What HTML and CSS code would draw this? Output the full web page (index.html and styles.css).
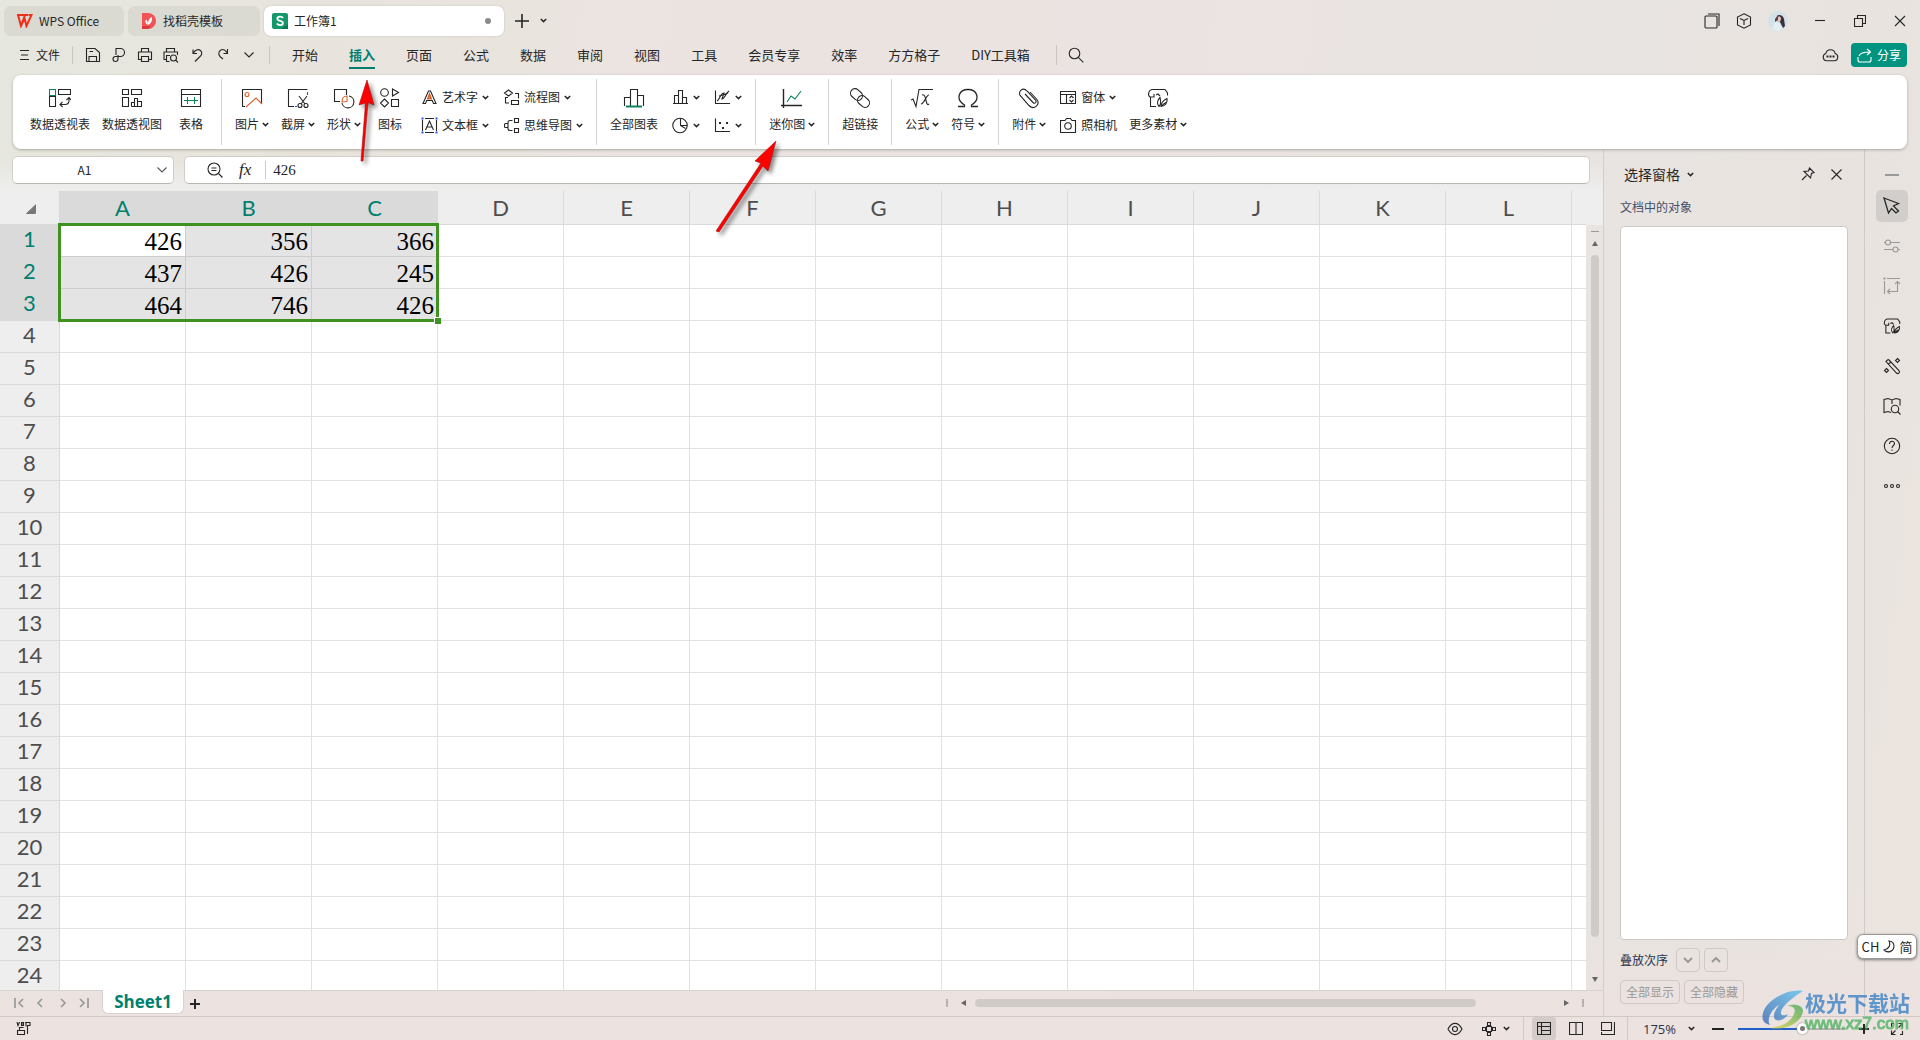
FILE: index.html
```html
<!DOCTYPE html>
<html lang="zh-CN">
<head>
<meta charset="utf-8">
<title>工作簿1 - WPS Office</title>
<link rel="stylesheet" href="styles.css">
</head>
<body>
<svg class="sprite" aria-hidden="true">
  <symbol id="chev" viewBox="0 0 7 5"><path d="M.8 1 3.5 3.6 6.2 1" fill="none" stroke="currentColor" stroke-width="1.5"/></symbol>
  <symbol id="chev-l" viewBox="0 0 12 8"><path d="M1.5 1.5 6 6 10.500 1.500" fill="none" stroke="currentColor" stroke-width="1.1"/></symbol>
  <symbol id="material" viewBox="0 0 22 22"><path d="M9 19.500H3.500V10M3 10C0 8 2 3 5 2.500h13l2.500 3.500v2.500M3 10h4V7M9 8l2-1 2 2M12 19.500c-3-3-1-7 1-9 1 4 1 7-1 9zm2 0c0-4 2-6 6-8 1 4-2 8-6 8zm0 0c1-1 3-3 5-4"/></symbol>
</svg>

<header class="titlebar">
  <nav class="doc-tabs" aria-label="文档">
    <button class="doc-tab doc-home">
      <svg width="17" height="14" viewBox="0 0 17 14"><path d="M1 1h11l-2 0M2 1l3 11 3.500-8M5 12l4-11M8.500 4l2 8L15.500 1h-3" fill="none" stroke="#f0301c" stroke-width="2"/></svg>
      <span>WPS Office</span>
    </button>
    <button class="doc-tab doc-template">
      <svg width="15" height="16" viewBox="0 0 15 16"><path d="M1 0h6a8 8 0 0 1 0 16H1z" fill="#f25355"/><path d="M1 13h9l-3 3H1z" fill="#d9383c"/><path d="M6.500 12C4 10 4 8 5 6.500 7 8 7 10 6.500 12zm.5 0C7 8 8 5 11 4c.5 4-1 6.500-4 8z" fill="#fff"/></svg>
      <span>找稻壳模板</span>
    </button>
    <button class="doc-tab doc-current">
      <svg width="16" height="16" viewBox="0 0 16 16"><rect width="16" height="16" rx="2" fill="#12986a"/><path d="M9 16h7v-5z" fill="#0b7a53"/><path d="M11 4.800C9.500 3 5.300 3.200 5.300 5.800c0 2.800 5.600 1.400 5.600 4.200 0 2.700-4.500 2.700-6 .6" fill="none" stroke="#fff" stroke-width="1.800"/></svg>
      <span>工作簿1</span><i class="dot"></i>
    </button>
    <button class="plain" aria-label="新建"><svg class="ico" width="14" height="14" viewBox="0 0 14 14"><path d="M7 0v14M0 7h14" stroke-width="1.600"/></svg></button>
    <button class="plain" aria-label="标签列表"><svg width="7" height="5"><use href="#chev"/></svg></button>
  </nav>
  <div class="win-controls">
    <button class="plain" aria-label="窗口"><svg class="ico" width="16" height="16" viewBox="0 0 16 16"><rect x="1" y="3" width="12" height="12" rx="1"/><path d="M4 1h11v12"/></svg></button>
    <button class="plain" aria-label="应用"><svg class="ico" width="16" height="16" viewBox="0 0 16 16"><path d="M8 .8 14.500 4v8L8 15.200 1.500 12V4zM4 5.500l4 2 4-2M8 7.500V12"/></svg></button>
    <button class="plain avatar" aria-label="账户"><svg width="20" height="20" viewBox="0 0 20 20"><circle cx="10" cy="10" r="10" fill="#d3e1e9"/><path d="M9 5c2-2 6-1 7 3l1 7-2 2-3-6-2-1z" fill="#39303c"/><path d="M7 8l3-4 2 1-2 4-3 2z" fill="#5a4448"/><path d="M10 6c2-1 3 0 3 2l-1 3-2-1z" fill="#e9c4b8"/><path d="M4 18l3-7 4 1 3 6-4 2z" fill="#e4eff4"/></svg></button>
    <button class="plain" aria-label="最小化"><svg class="ico" width="12" height="12" viewBox="0 0 12 12"><path d="M1 5.500h10"/></svg></button>
    <button class="plain" aria-label="还原"><svg class="ico" width="12" height="12" viewBox="0 0 12 12"><path d="M.5 3.500h8v8h-8zM3.500 3.500v-3h8v8h-3"/></svg></button>
    <button class="plain" aria-label="关闭"><svg class="ico" width="12" height="12" viewBox="0 0 12 12"><path d="M1 1l10 10M11 1 1 11"/></svg></button>
  </div>
</header>

<div class="menubar">
  <button class="file-menu"><svg class="ico" width="9" height="12" viewBox="0 0 9 12"><path d="M0 1.500h9M1 6h7M0 10.500h9"/></svg>文件</button>
  <div class="quick">
    <button class="plain" aria-label="保存"><svg class="ico" width="16" height="16" viewBox="0 0 16 16"><path d="M1.500 14.500v-13H10l4.500 4v9zM4 14V9.500h7.500V14M4.500 4.500H8"/></svg></button>
    <button class="plain" aria-label="输出"><svg class="ico" width="16" height="16" viewBox="0 0 16 16"><path d="M5 8V1.500h4.500a4 4 0 0 1 0 8H4.500a2.500 2.500 0 1 0 2.500 2.500V8"/></svg></button>
    <button class="plain" aria-label="打印"><svg class="ico" width="16" height="16" viewBox="0 0 16 16"><path d="M4.500 5V1.500h7V5M4 12.500H1.500V5h13v7.500H12M4.500 9.500h7v5h-7z"/></svg></button>
    <button class="plain" aria-label="打印预览"><svg class="ico" width="16" height="16" viewBox="0 0 16 16"><path d="M3.500 5V1.500h8V5M3 12.500H1V5h13.500v3M6.500 14.500h-3v-6H7"/><circle cx="10.500" cy="11" r="3"/><path d="m12.700 13.200 2.300 2.300"/></svg></button>
    <button class="plain" aria-label="撤销"><svg class="ico" width="16" height="16" viewBox="0 0 16 16"><path d="M4 2.500v4h4M4.200 6.300C6 3 9 1.500 11.500 3.500c2.500 2.200 1 5-1 6.500L6 14.500"/></svg></button>
    <button class="plain" aria-label="重做"><svg class="ico" width="16" height="16" viewBox="0 0 16 16"><path d="M12.500 2v4.500h-4M12.300 6.300C11 3 8 1.500 5.500 3.300 3 5.300 3.500 8 5.500 10L8 12"/></svg></button>
    <button class="plain" aria-label="更多"><svg width="12" height="8"><use href="#chev-l"/></svg></button>
  </div>
  <nav class="menu-tabs" aria-label="功能区">
    <button>开始</button><button class="active">插入</button><button>页面</button><button>公式</button><button>数据</button><button>审阅</button><button>视图</button><button>工具</button><button>会员专享</button><button>效率</button><button>方方格子</button><button>DIY工具箱</button>
  </nav>
  <button class="plain search" aria-label="搜索"><svg class="ico" width="16" height="16" viewBox="0 0 16 16"><circle cx="6.500" cy="6.500" r="5.300"/><path d="m10.300 10.300 5 5"/></svg></button>
  <div class="share-area">
    <button class="plain" aria-label="云"><svg class="ico" width="17" height="14" viewBox="0 0 17 14"><path d="M4.500 12.800a3.700 3.700 0 0 1-.7-7.200 4.800 4.800 0 0 1 9.400 0 3.700 3.700 0 0 1-.7 7.200z"/><path d="M4.500 8.500h2M7.500 8.500h2M10.500 8.500h2" stroke-width="2"/></svg></button>
    <button class="share"><svg class="ico" width="15" height="15" viewBox="0 0 15 15"><path d="M1 9v3q0 2 2 2h9q2 0 2-2V9M2 8c1-3 4-4 11-4M10 1l3.500 3L10 7"/></svg>分享</button>
  </div>
</div>

<section class="ribbon" aria-label="插入">
  <div class="group">
    <button class="tool"><svg class="ico" width="22" height="22" viewBox="0 0 22 22"><path d="M.5 9.500h6v10h-6zM9.500 2.500h12v5h-12zM11 17.500h5q4 0 4-4v-2M13.500 15 11 17.500l2.500 2.500M17.500 13 20 10.500l2 2.500"/><path class="green" d="M.5 2.500h6v6h-6z"/></svg><span>数据透视表</span></button>
    <button class="tool"><svg class="ico" width="22" height="22" viewBox="0 0 22 22"><path d="M1.500 2.500h6v5h-6zM10.500 2.500h10v5h-10zM1.500 10.500h6v9h-6zM10.500 19.500v-4h3v4M13.500 19.500v-8h3v8M16.500 14.500h4v5h-10"/></svg><span>数据透视图</span></button>
    <button class="tool"><svg class="ico" width="22" height="22" viewBox="0 0 22 22"><path d="M1.500 2.500h19v17h-19zM1.500 7.500h19"/><path class="green" d="M4 13.500h14M7.500 10v7M14.500 10v7"/></svg><span>表格</span></button>
  </div>
  <div class="group">
    <button class="tool"><svg class="ico" width="22" height="22" viewBox="0 0 22 22"><path d="M4 19.500H1.500v-17h19V17"/><path class="orange" d="m5 20 10-9 6 6M4 7.500a2 2 0 1 0 4 0 2 2 0 1 0-4 0"/></svg><span>图片<svg width="7" height="5"><use href="#chev"/></svg></span></button>
    <button class="tool"><svg class="ico" width="22" height="22" viewBox="0 0 22 22"><path d="M7 19.500H1.500v-17h19M12 9l6 8M20 9l-6 8"/><circle cx="13" cy="18.500" r="2"/><circle cx="19" cy="18.500" r="2"/><path class="blue" d="M20.500 5v3M8 19.500h2"/></svg><span>截屏<svg width="7" height="5"><use href="#chev"/></svg></span></button>
    <button class="tool"><svg class="ico" width="22" height="22" viewBox="0 0 22 22"><path d="M7 14.500H1.500v-12h12V8M16 9a6 6 0 1 1-7 7"/><path class="orange" d="M9 15c0-4 2-6 5-6v5.500z"/></svg><span>形状<svg width="7" height="5"><use href="#chev"/></svg></span></button>
    <button class="tool"><svg class="ico" width="22" height="22" viewBox="0 0 22 22"><circle cx="5.500" cy="5.500" r="3.800"/><path d="M13.500 2v7l6-3.500zM5.500 12l4 4-4 4-4-4zM12.500 12.500h7v7h-7z"/></svg><span>图标</span></button>
    <div class="stack">
      <button class="mini"><svg class="ico" width="17" height="17" viewBox="0 0 17 17"><path d="M2 14.500 7.500 2h2L15 14.500h-2.500l-1.200-3H5.700l-1.200 3z"/><path d="M8.500 4.500 6.500 10h4z" fill="#e4763c" stroke="#d8622b"/></svg>艺术字<svg width="7" height="5"><use href="#chev"/></svg></button>
      <button class="mini"><svg class="ico" width="17" height="17" viewBox="0 0 17 17"><path d="M1.500 3v11M15.500 3v11M4 1.500h9M4 15.500h9M4.500 13l4-9 4 9M6 10h5"/><path class="blue" stroke-width="2" d="M.5 1.500h2M14.500 1.500h2M.5 15.500h2M14.500 15.500h2"/></svg>文本框<svg width="7" height="5"><use href="#chev"/></svg></button>
    </div>
    <div class="stack">
      <button class="mini"><svg class="ico" width="17" height="17" viewBox="0 0 17 17"><path d="m5.500 1 4 3-4 3-4-3zM12 4.500h3.500v5M5 8.500H2.500V14H6M8.500 11.500h7v4h-7z"/></svg>流程图<svg width="7" height="5"><use href="#chev"/></svg></button>
      <button class="mini"><svg class="ico" width="17" height="17" viewBox="0 0 17 17"><path d="M11.500 1.500h4v4h-4zM11.500 11.500h4v4h-4zM9.500 3.500H7q-2 0-2 2v6q0 2 2 2h2.500M2.500 6.500H5v4H2.500a1 1 0 0 1-1-1v-2a1 1 0 0 1 1-1z"/></svg>思维导图<svg width="7" height="5"><use href="#chev"/></svg></button>
    </div>
  </div>
  <div class="group">
    <button class="tool"><svg class="ico" width="22" height="22" viewBox="0 0 22 22"><path d="M1.500 19v-8.500h6M7.500 19V2.500h7V19M14.500 8.500h6V19"/><path class="green" stroke-width="2" d="M3 19.500h16"/></svg><span>全部图表</span></button>
    <div class="stack">
      <button class="mini" aria-label="柱形图"><svg class="ico" width="17" height="17" viewBox="0 0 17 17"><path d="M1 14.500h15M2.500 14V6.500h4V14M6.500 14V1.500h4V14M10.500 8.500h4V14"/></svg><svg width="7" height="5"><use href="#chev"/></svg></button>
      <button class="mini" aria-label="饼图"><svg class="ico" width="17" height="17" viewBox="0 0 17 17"><circle cx="8" cy="8.500" r="7.200"/><path d="M8.500 1.500v7l5 3M8.500 8.500h7"/></svg><svg width="7" height="5"><use href="#chev"/></svg></button>
    </div>
    <div class="stack">
      <button class="mini" aria-label="折线图"><svg class="ico" width="17" height="17" viewBox="0 0 17 17"><path d="M1.500 1.500v13H16M3 12c3-1 3-8 7-8l-2 6c3 0 3-5 7-8M5 7c5-1 5-1 9-3"/></svg><svg width="7" height="5"><use href="#chev"/></svg></button>
      <button class="mini" aria-label="散点图"><svg class="ico" width="17" height="17" viewBox="0 0 17 17"><path d="M1.500 1.500v13H16"/><path stroke-width="2" d="M5 6h2M8 11h2M12 6h2"/></svg><svg width="7" height="5"><use href="#chev"/></svg></button>
    </div>
  </div>
  <div class="group">
    <button class="tool"><svg class="ico" width="22" height="22" viewBox="0 0 22 22"><path stroke-width="1.400" d="M2.500 2v19M0 18.500h21"/><path class="green" d="m6 15 4-6 4 3 6-8"/></svg><span>迷你图<svg width="7" height="5"><use href="#chev"/></svg></span></button>
  </div>
  <div class="group">
    <button class="tool"><svg class="ico" width="22" height="22" viewBox="0 0 22 22"><rect x="1" y="3" width="13" height="9" rx="4.500" transform="rotate(42 7.500 7.500)"/><rect x="8" y="10" width="13" height="9" rx="4.500" transform="rotate(42 14.500 14.500)"/></svg><span>超链接</span></button>
  </div>
  <div class="group">
    <button class="tool"><svg class="ico" width="22" height="22" viewBox="0 0 22 22"><path d="M0 13l2-1 3 7.500L8 2.500h14M11 8c5-2 3 12 7 9M18 8c-2-1-5 9-8 9"/></svg><span>公式<svg width="7" height="5"><use href="#chev"/></svg></span></button>
    <button class="tool"><svg class="ico" width="22" height="22" viewBox="0 0 22 22"><path stroke-width="1.300" d="M1 19.500h6.500V18C-2 12 2 2.500 11 2.500S24 12 14.500 18v1.500H21"/></svg><span>符号<svg width="7" height="5"><use href="#chev"/></svg></span></button>
  </div>
  <div class="group">
    <button class="tool"><svg class="ico" width="22" height="22" viewBox="0 0 22 22"><path d="m7 7 8 8.500c2 2 4-.5 2.500-2.500L9 4C5-.5-1.500 5 3 9.500l8 9c5 5 12-1 7.500-6.500L12 5"/></svg><span>附件<svg width="7" height="5"><use href="#chev"/></svg></span></button>
    <div class="stack">
      <button class="mini"><svg class="ico" width="17" height="17" viewBox="0 0 17 17"><path d="M.5 2.500h15v12H.500zM.5 5.500h15M6.500 5.500v9M9.500 9l2-2 2 2M9.500 11l2 2 2-2"/></svg>窗体<svg width="7" height="5"><use href="#chev"/></svg></button>
      <button class="mini"><svg class="ico" width="17" height="17" viewBox="0 0 17 17"><path d="M.5 3.500H5l1.500-2h4l1.500 2h3.500v12H.500z"/><circle cx="8" cy="9" r="3.300"/></svg>照相机</button>
    </div>
    <button class="tool"><svg class="ico" width="22" height="22"><use href="#material"/></svg><span>更多素材<svg width="7" height="5"><use href="#chev"/></svg></span></button>
  </div>
</section>

<main class="workspace">
  <section class="sheet-area">
    <div class="formula-row">
      <div class="name-box"><input aria-label="名称框" value="A1"><svg width="12" height="8"><use href="#chev-l"/></svg></div>
      <div class="formula-box">
        <svg class="ico" width="16" height="16" viewBox="0 0 16 16"><circle cx="7" cy="7" r="6"/><path d="m11.500 11.500 4 4M4.500 6h5M4.500 8.500h5"/></svg>
        <span class="fx">fx</span>
        <input aria-label="编辑栏" value="426">
      </div>
    </div>
    <div class="grid-row">
      <div class="grid">
        <table>
          <thead><tr id="heads"><th class="corner"><svg width="10" height="10" viewBox="0 0 10 10"><path d="M10 0v8.500q0 1.500-1.500 1.500H1Q-.5 10 .5 9z" fill="#777"/></svg></th></tr></thead>
          <tbody id="rows"></tbody>
        </table>
        <div class="selection"></div>
      </div>
      <div class="vscroll"><i class="vtop"></i><svg width="6" height="5" viewBox="0 0 6 5"><path d="M3 0l3 5H0z" fill="#666"/></svg><i class="vthumb"></i><svg width="6" height="5" viewBox="0 0 6 5"><path d="M0 0h6L3 5z" fill="#666"/></svg></div>
    </div>
    <div class="sheet-bar">
      <div class="sheet-nav">
        <button class="plain" aria-label="第一张"><svg class="ico" width="10" height="10" viewBox="0 0 10 10"><path d="M1 0v10M9 1 5 5l4 4"/></svg></button>
        <button class="plain" aria-label="上一张"><svg class="ico" width="10" height="10" viewBox="0 0 10 10"><path d="M7 1 3 5l4 4"/></svg></button>
        <button class="plain" aria-label="下一张"><svg class="ico" width="10" height="10" viewBox="0 0 10 10"><path d="m3 1 4 4-4 4"/></svg></button>
        <button class="plain" aria-label="最后一张"><svg class="ico" width="10" height="10" viewBox="0 0 10 10"><path d="M9 0v10M1 1l4 4-4 4"/></svg></button>
      </div>
      <button class="sheet-tab">Sheet1</button>
      <button class="plain add" aria-label="新建工作表"><svg class="ico" width="10" height="10" viewBox="0 0 10 10"><path d="M5 0v10M0 5h10" stroke-width="2"/></svg></button>
      <div class="hscroll"><i class="bar"></i><svg width="5" height="6" viewBox="0 0 5 6"><path d="M5 0v6L0 3z" fill="#666"/></svg><div class="track"><i class="thumb"></i></div><svg width="5" height="6" viewBox="0 0 5 6"><path d="M0 0v6l5-3z" fill="#666"/></svg><i class="bar"></i></div>
    </div>
  </section>

  <aside class="pane">
    <div class="pane-head">
      <h2>选择窗格</h2><svg width="7" height="5"><use href="#chev"/></svg>
      <button class="plain pin" aria-label="固定"><svg class="ico" width="14" height="14" viewBox="0 0 14 14"><path d="m8.500 1 4.500 4.500-2.500 1L9.500 11 3 4.500 7.500 4zM5.500 8.500 1 13"/></svg></button>
      <button class="plain" aria-label="关闭窗格"><svg class="ico" width="11" height="11" viewBox="0 0 11 11"><path d="m.5.500 10 10M10.500.500l-10 10"/></svg></button>
    </div>
    <p class="pane-label">文档中的对象</p>
    <div class="object-list"></div>
    <div class="order"><span>叠放次序</span>
      <button class="box-btn" aria-label="下移"><svg class="ico" width="10" height="6" viewBox="0 0 10 6"><path d="m1 1 4 4 4-4"/></svg></button>
      <button class="box-btn" aria-label="上移"><svg class="ico" width="10" height="6" viewBox="0 0 10 6"><path d="m1 5 4-4 4 4"/></svg></button>
    </div>
    <div class="show-btns"><button class="box-btn">全部显示</button><button class="box-btn">全部隐藏</button></div>
  </aside>

  <nav class="sidebar" aria-label="任务窗格">
    <button class="plain collapse" aria-label="折叠"><i></i></button>
    <button class="side on" aria-label="选择"><svg class="ico" width="18" height="18" viewBox="0 0 18 18"><path stroke-width="1.300" d="m1 1 14.500 5.500-5 2.500 5 5-2.500 2-4.500-4.500L5.500 16z"/></svg></button>
    <button class="side dim" aria-label="属性"><svg class="ico" width="18" height="18" viewBox="0 0 18 18"><path d="M1 5.500h2M7.500 5.500H17M1 12.500h9M15 12.500h2"/><circle cx="5" cy="5.500" r="2.500"/><circle cx="12.500" cy="12.500" r="2.500"/></svg></button>
    <button class="side dim" aria-label="跳转"><svg class="ico" width="18" height="18" viewBox="0 0 18 18"><path d="M4 1.500h13M1.500 4v13M5 14.500h9.500V5M7 12l-2.500 2.500L7 17M12 7l2.500-2.500L17 7"/><path stroke-width="2" d="M.5 1.500h2"/></svg></button>
    <button class="side" aria-label="素材"><svg class="ico heavy" width="18" height="18"><use href="#material"/></svg></button>
    <button class="side" aria-label="美化"><svg class="ico" width="18" height="18" viewBox="0 0 18 18"><path d="M4.500 3 3 4.500 13.500 16c1.500 1.500 4-.5 2.500-2.500L6 3Q5.200 2.200 4.500 3zM5.500 7 8 5M14.500 1.500l2 2-2 2-2-2zM3.500 11.500l2 2-2 2-2-2z"/></svg></button>
    <button class="side" aria-label="查找"><svg class="ico" width="18" height="18" viewBox="0 0 18 18"><path d="M8 15.500 5 14.500l-4 1v-13l4-1 4 1.500 4-1.500 4 1v6M9 3v4"/><circle cx="12" cy="12" r="3.700"/><path d="m14.500 14.500 3 3"/></svg></button>
    <button class="side" aria-label="帮助"><svg class="ico" width="18" height="18" viewBox="0 0 18 18"><circle cx="9" cy="9" r="7.700"/><path d="M6.500 7c0-3.500 5-3.500 5-.5 0 2-2.500 2-2.500 4.500M9 12.500v1.300"/></svg></button>
    <button class="side" aria-label="更多"><svg class="ico" width="18" height="18" viewBox="0 0 18 18"><circle cx="3" cy="9" r="1.500"/><circle cx="9" cy="9" r="1.500"/><circle cx="15" cy="9" r="1.500"/></svg></button>
  </nav>
</main>

<footer class="status">
  <svg class="ico macro" width="15" height="14" viewBox="0 0 15 14"><path d="m1 0 1 3.500L3.500 0M5.500.500h2v3h-2zM5.500 2h2M9 .500h5v3h-2.500V12M10 .500v4M1.500 12.500v-4h7v4zM3.500 8V5.500h4"/></svg>
  <button class="plain eye" aria-label="护眼"><svg class="ico" width="16" height="14" viewBox="0 0 16 14"><path d="M1 7c4-7.500 10-7.500 14 0-4 7.500-10 7.500-14 0z"/><circle cx="8" cy="7" r="2.500"/></svg></button>
  <button class="plain reading" aria-label="阅读"><svg class="ico" width="14" height="14" viewBox="0 0 14 14"><path d="M5.500.500h3v3h-3zM5.500 10.500h3v3h-3zM.5 5.500h3v3h-3zM10.500 5.500h3v3h-3zM4.500 4.500h5v5h-5z"/></svg><svg width="7" height="5"><use href="#chev"/></svg></button>
  <div class="views">
    <button class="view on" aria-label="普通视图"><svg class="ico" width="14" height="13" viewBox="0 0 14 13"><path d="M.5.500h13v12H.500zM.5 4.500h13M4.500.500v12M4.500 8.500h9"/></svg></button>
    <button class="view" aria-label="分页预览"><svg class="ico" width="14" height="13" viewBox="0 0 14 13"><path d="M.5.500h13v12H.500zM7 .500v12"/></svg></button>
    <button class="view" aria-label="页面布局"><svg class="ico" width="14" height="13" viewBox="0 0 14 13"><path d="M.5.500h10v8H.500zM.5 10v2.500h13V0"/></svg></button>
  </div>
  <button class="plain zoom-val">175%<svg width="7" height="5"><use href="#chev"/></svg></button>
  <button class="plain minus" aria-label="缩小"><i></i></button>
  <input class="zoom" type="range" min="0" max="100" value="61" aria-label="缩放">
  <button class="plain plus" aria-label="放大"><svg class="ico" width="10" height="10" viewBox="0 0 10 10"><path d="M5 0v10M0 5h10" stroke-width="2"/></svg></button>
  <button class="plain full" aria-label="全屏"><svg class="ico" width="14" height="14" viewBox="0 0 14 14"><path d="M8.500 1.500h4v4M5.500 12.500h-4v-4M12 2 8.500 5.500M2 12l3.500-3.500M1.500 5V1.500H4M12.500 9v3.500H10"/></svg></button>
</footer>

<div class="ime">CH <svg class="ico" width="12" height="13" viewBox="0 0 12 13"><path d="M6 1c2 4 0 8-5 9 4 4 10 1 10-4 0-3-2-5-5-5z"/></svg> 简</div>

<svg class="arrow arrow-tab" width="26" height="88" viewBox="0 0 26 88"><path d="M6 82 10.500 24 4 26 12 1l7 25-6-2.500L8 82z" fill="#f00" stroke="#a31010" stroke-width=".6"/></svg>
<svg class="arrow arrow-spark" width="68" height="98" viewBox="0 0 68 98"><path d="M3 92 48 24l-6-2L63 2l-8 30-5-5L6 93z" fill="#f00" stroke="#a31010" stroke-width=".6"/></svg>

<div class="watermark">
  <svg width="44" height="42" viewBox="0 0 44 42"><defs><linearGradient id="wg" x1="0" y1="1" x2="1" y2="0"><stop offset="0" stop-color="#2f62b0"/><stop offset="1" stop-color="#53c0ee"/></linearGradient><linearGradient id="wy" x1="0" y1="1" x2="1" y2="0"><stop offset="0" stop-color="#d8d43c"/><stop offset="1" stop-color="#3ca557"/></linearGradient></defs><path d="M42 2C26-1 5 12 2 24c-2 8 2 11 7 12-4-6 2-16 9-20-5 6-7 13-3 15 5 2 11-3 12-6-3 2-8 2-7-2 1-6 12-15 22-21z" fill="url(#wg)"/><path d="M9 39c16 3 32-6 33-17 0-5-7-8-16-5 7 0 9 3 7 8-3 8-13 13-24 14z" fill="url(#wy)"/></svg>
  <div><b>极光下载站</b><span>www.xz7.com</span></div>
</div>
<script src="grid.js"></script>
</body>
</html>
```
FILE: styles.css
```css
* { box-sizing: border-box; }

body {
  margin: 0;
  height: 100vh;
  display: flex;
  flex-direction: column;
  overflow: hidden;
  position: relative;
  font: 12px/16px "Noto Sans CJK SC", sans-serif;
  color: #262626;
  background:
    linear-gradient(transparent 90%, #ece2e0 97%),
    linear-gradient(97deg, #e6e7df 0%, #e8e4dd 16%, #ebe3e0 34%, #ebe3e1 58%, #e8e4e1 78%, #e8e3df 92%, #ece4df 100%);
}

button { font: inherit; color: inherit; background: none; border: 0; padding: 0; white-space: nowrap; }
input { font: inherit; color: inherit; border: 0; outline: 0; background: none; padding: 0; min-width: 0; }
svg { display: block; flex: none; }
.sprite { position: absolute; width: 0; height: 0; }
.ico { fill: none; stroke: currentColor; stroke-width: 1.1; }
.heavy { stroke-width: 1.3; }
.green { stroke: #0c8260; }
.orange { stroke: #d8622b; }
.blue { stroke: #2456d8; }
.plain { display: grid; place-items: center; }

/* title bar */
.titlebar { display: flex; justify-content: space-between; align-items: center; height: 40px; padding: 1px 5px 0 4px; }
.doc-tabs { display: flex; align-items: center; gap: 4px; }
.doc-tab { height: 30px; border-radius: 7px; background: #dadad2; display: flex; align-items: center; gap: 6px; }
.doc-home { width: 120px; padding-left: 12px; }
.doc-template { width: 132px; padding-left: 13px; gap: 7px; }
.doc-current { width: 240px; padding: 0 13px 0 8px; background: #fff; box-shadow: 0 0 2px #bbb; }
.dot { width: 6px; height: 6px; border-radius: 50%; background: #8a8a8a; margin-left: auto; }
.doc-tabs .plain { margin-left: 7px; }
.win-controls { display: flex; align-items: center; gap: 10px; }
.win-controls .plain { width: 30px; height: 30px; }
.win-controls .plain:first-child { margin-right: -8px; }
.win-controls .avatar { margin: 0 2px 0 -6px; }

/* menu bar */
.menubar { display: flex; align-items: center; height: 30px; padding: 0 13px 0 20px; }
.file-menu { display: flex; align-items: center; gap: 7px; }
.quick { display: flex; gap: 10px; margin: 0 22px 0 12px; padding: 0 12px; border-left: 1px solid #c9c6c0; border-right: 1px solid #c9c6c0; height: 18px; align-items: center; }
.quick .plain { width: 16px; }
.menu-tabs { display: flex; gap: 31px; font-size: 13px; line-height: 24px; padding-top: 2px; }
.menu-tabs button { border-bottom: 2px solid transparent; }
.menu-tabs .active { color: #007f6e; font-weight: 700; border-color: #007f6e; }
.search { margin-left: 26px; padding-left: 11px; border-left: 1px solid #c9c6c0; height: 20px; }
.share-area { margin-left: auto; display: flex; align-items: center; gap: 12px; }
.share { display: flex; align-items: center; gap: 5px; height: 24px; padding: 0 6px; border-radius: 4px; background: #00937f; color: #fff; }

/* ribbon */
.ribbon { display: flex; margin: 5px 13px 0; height: 74px; padding: 4px; background: #fff; border-radius: 8px; box-shadow: 0 1px 3px #aaa6a0; position: relative; }
.group { display: flex; gap: 12px; padding: 8px 13px 0; border-right: 1px solid #d4d4d4; height: 66px; }
.group:last-child { border: 0; }
.tool { min-width: 34px; display: flex; flex-direction: column; align-items: center; gap: 7px; height: 45px; }
.tool span { display: flex; align-items: center; gap: 3px; }
.stack { display: flex; flex-direction: column; gap: 8px; padding-left: 2px; }
.mini { display: flex; align-items: center; gap: 4px; height: 20px; }

/* workspace */
.workspace { flex: 1; min-height: 0; display: grid; grid-template-columns: minmax(0, 1fr) 262px 55px; }
.sheet-area { display: flex; flex-direction: column; min-width: 0; min-height: 0; }
.formula-row { display: flex; gap: 10px; padding: 7px 13px 7px 12px; background: linear-gradient(transparent 30%, #eee); }
.name-box, .formula-box { height: 28px; background: #fff; border: 1px solid #d0cec6; border-bottom-color: #b6b6b0; border-radius: 5px; display: flex; align-items: center; }
.name-box { width: 162px; padding-right: 5px; color: #555; }
.name-box input { flex: 1; text-align: center; color: #222; }
.formula-box { flex: 1; padding-left: 22px; }
.fx { font: italic 17px/18px "Liberation Serif", serif; padding: 0 14px 0 16px; border-right: 1px solid #ccc; height: 18px; }
.formula-box input { flex: 1; padding-left: 7px; font: 15px/20px "Liberation Serif", serif; }

.grid-row { flex: 1; min-height: 0; display: flex; }
.grid { flex: 1; overflow: hidden; position: relative; background: #fff; }
table { table-layout: fixed; width: 1698px; border-spacing: 0; }
th, td { height: 32px; padding: 0; width: 126px; border: solid #e2e2e2; border-width: 0 1px 1px 0; overflow: hidden; }
th { font: 22px/24px Lato, sans-serif; color: #4d4d4d; background: #eee; border-color: #dadada; }
thead th { height: 34px; }
th:first-child { width: 60px; }
tbody th { padding-bottom: 4px; }
td { font: 25px/28px "Liberation Serif", serif; color: #000; text-align: right; padding: 2px 3px 0 0; }
.corner svg { margin-left: 26px; margin-top: 3px; }
th.sel { background: #dadada; color: #007f6e; border-color: #dadada; }
td.sel { background: #e4e4e4; border-color: #cdcdcd; }
td.cursor { background: #fff; }
.selection { position: absolute; left: 58px; top: 32px; width: 381px; height: 99px; border: 3px solid #3f921f; }
.selection::after { content: ""; position: absolute; right: -5px; bottom: -5px; width: 6px; height: 6px; background: #3f921f; border: solid #fff; border-width: 1px 0 0 1px; }

.vscroll { width: 17px; display: flex; flex-direction: column; align-items: center; padding: 34px 0 8px; gap: 9px; background: linear-gradient(#eee 34px, transparent 34px); }
.vtop { width: 8px; height: 1px; background: #999; margin: 6px 0 0; }
.vthumb { width: 8px; flex: 1; margin: 0 0 31px; border-radius: 4px; background: #d1cbc8; }

.sheet-bar { height: 26px; display: flex; align-items: flex-start; border-top: 1px solid #d8d3d0; }
.sheet-nav { display: flex; gap: 11px; padding: 7px 13px 0 14px; color: #999; }
.sheet-nav .ico { stroke-width: 1.700; }
.sheet-nav .plain:nth-child(3) { margin-left: 2px; }
.sheet-tab { width: 82px; height: 24px; margin-top: -1px; background: #fff; border: 1px solid #d8d3d0; border-top: 0; border-radius: 0 0 6px 6px; font: 700 17px/22px "Open Sans", sans-serif; color: #007f6e; }
.add { margin: 8px 0 0 6px; }
.hscroll { width: 638px; margin: 8px 19px 0 auto; height: 8px; display: flex; align-items: center; gap: 13px; }
.hscroll .bar { width: 2px; height: 8px; background: #b8b3b0; }
.track { flex: 1; margin-left: -4px; }
.thumb { display: block; width: 87%; height: 8px; border-radius: 4px; background: #d1cbc8; }

/* selection pane */
.pane { border-left: 1px solid #d3cecb; border-right: 1px solid #cfcac7; padding: 15px 16px 12px; display: flex; flex-direction: column; min-height: 0; }
.pane-head { display: flex; align-items: center; height: 20px; padding: 0 6px 0 4px; }
h2 { font-size: 14px; font-weight: 400; line-height: 20px; margin: 0 7px 0 0; }
.pin { margin: 0 16px 0 auto; }
.pane-label { margin: 15px 0 11px; color: #44506a; }
.object-list { flex: 1; background: #fff; border: 1px solid #cdc9c6; border-radius: 4px; }
.order { display: flex; align-items: center; margin-top: 8px; gap: 4px; color: #24344e; }
.order span { margin-right: 4px; }
.box-btn { height: 24px; border: 1px solid #cfc9c7; border-radius: 4px; color: #999; display: grid; place-items: center; }
.order .box-btn { width: 24px; }
.order .ico { stroke-width: 2; }
.show-btns { display: flex; gap: 4px; margin-top: 8px; }
.show-btns .box-btn { width: 60px; }

/* side bar */
.sidebar { display: flex; flex-direction: column; align-items: center; gap: 8px; padding: 18px 1px 0 0; }
.collapse { height: 15px; }
.collapse i { width: 14px; height: 2px; background: #999; }
.side { width: 32px; height: 32px; border-radius: 5px; display: grid; place-items: center; }
.side.on { background: #d1cecb; }
.side.dim { color: #999; }

/* status bar */
.status { height: 24px; border-top: 1px solid #cfc8c5; display: flex; align-items: center; padding: 0 16px; }
.macro { margin-right: auto; }
.eye { margin-right: 19px; }
.reading { display: flex; align-items: center; gap: 7px; margin-right: 13px; }
.views { display: flex; gap: 8px; padding: 0 7px 0 8px; border: solid #d0c9c6; border-width: 0 1px; }
.view { width: 24px; height: 23px; border-radius: 3px; display: grid; place-items: center; }
.view.on { background: #d3ccc9; }
.zoom-val { display: flex; align-items: center; gap: 12px; margin: 0 17px 0 15px; font: 13px/16px "Open Sans", sans-serif; color: #24344e; }
.zoom-val svg { color: #262626; }
.minus i { width: 12px; height: 2px; background: #222; }
.zoom { appearance: none; width: 107px; height: 12px; margin: 0 14px; background: linear-gradient(90deg, #2060c8 60%, #b9b4b2 60%) center / 100% 2px no-repeat; }
.zoom::-webkit-slider-thumb { appearance: none; width: 11px; height: 11px; border-radius: 50%; border: 3px solid #fff; background: #777; box-shadow: 0 0 2px #777; }
.full { margin: 0 0 0 21px; }

/* overlays */
.ime { position: absolute; right: 3px; bottom: 81px; width: 60px; height: 25px; background: #fff; border-radius: 6px; border: 1px solid #999; box-shadow: 0 1px 3px #777; display: flex; align-items: center; justify-content: center; gap: 4px; white-space: nowrap; font-size: 13px; }
.arrow { position: absolute; filter: drop-shadow(3px 3px 2px #0007); overflow: visible; }
.arrow-tab { left: 355px; top: 79px; }
.arrow-spark { left: 713px; top: 139px; }
.watermark { position: absolute; right: 10px; bottom: 8px; display: flex; opacity: .75; }
.watermark div { display: flex; flex-direction: column; }
.watermark b { font-size: 21px; line-height: 26px; color: #2f7cc4; }
.watermark span { font: 17px/17px "Liberation Sans", sans-serif; color: #46b25c; -webkit-text-stroke: 1px #46b25c; }
```
FILE: grid.js
```js
const values = [[426, 356, 366], [437, 426, 245], [464, 746, 426]];
const columns = [..."ABCDEFGHIJKL", ""];
const heads = document.getElementById("heads");
columns.forEach((name, c) => {
  const th = document.createElement("th");
  th.textContent = name;
  if (c < 3) th.className = "sel";
  heads.append(th);
});
const body = document.getElementById("rows");
for (let r = 0; r < 24; r++) {
  const tr = document.createElement("tr");
  const th = document.createElement("th");
  th.textContent = r + 1;
  if (r < 3) th.className = "sel";
  tr.append(th);
  columns.forEach((_, c) => {
    const td = document.createElement("td");
    if (r < 3 && c < 3) {
      td.textContent = values[r][c];
      td.className = r + c === 0 ? "sel cursor" : "sel";
    }
    tr.append(td);
  });
  body.append(tr);
}
```
